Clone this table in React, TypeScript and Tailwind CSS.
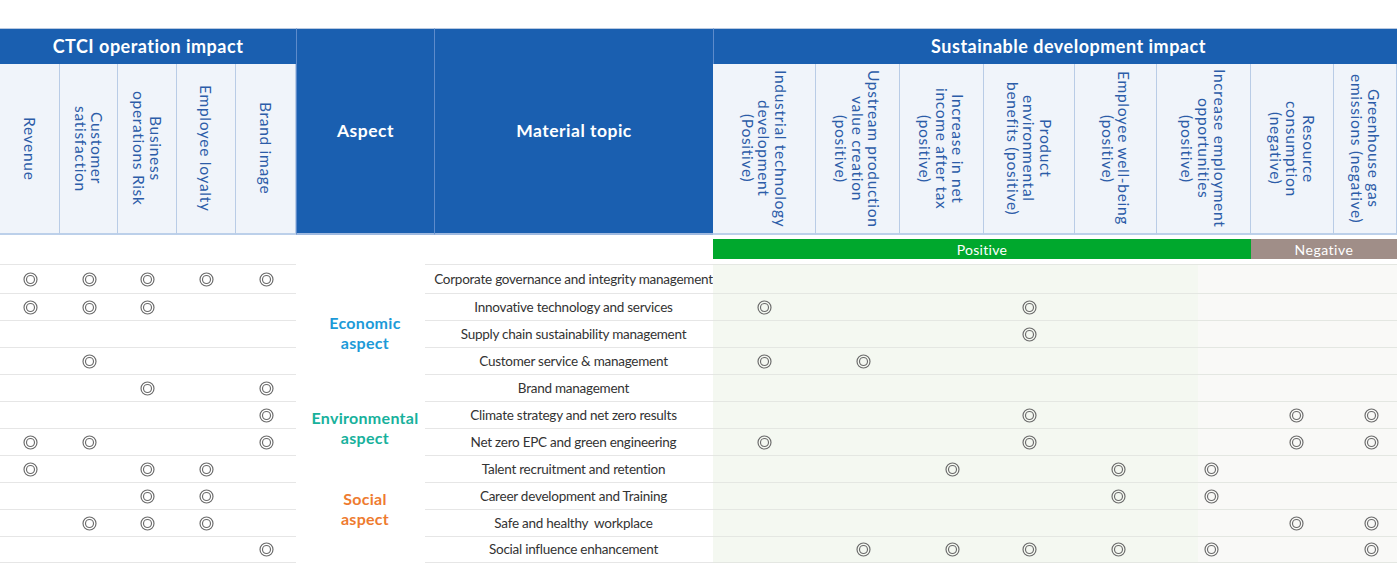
import React from "react";

const ctciCols: string[][] = [
  ["Revenue"],
  ["Customer", "satisfaction"],
  ["Business", "operations Risk"],
  ["Employee loyalty"],
  ["Brand image"],
];

const sdCols: string[][] = [
  ["Industrial technology", "development", "(Positive)"],
  ["Upstream production", "value creation", "(positive)"],
  ["Increase in net", "income after tax", "(positive)"],
  ["Product", "environmental", "benefits (positive)"],
  ["Employee well-being", "(positive)"],
  ["Increase employment", "opportunities", "(positive)"],
  ["Resource", "consumption", "(negative)"],
  ["Greenhouse gas", "emissions (negative)"],
];

type Row = { topic: string; ctci: number[]; sd: number[] };

const rows: Row[] = [
  { topic: "Corporate governance and integrity management", ctci: [1, 1, 1, 1, 1], sd: [0, 0, 0, 0, 0, 0, 0, 0] },
  { topic: "Innovative technology and services", ctci: [1, 1, 1, 0, 0], sd: [1, 0, 0, 1, 0, 0, 0, 0] },
  { topic: "Supply chain sustainability management", ctci: [0, 0, 0, 0, 0], sd: [0, 0, 0, 1, 0, 0, 0, 0] },
  { topic: "Customer service & management", ctci: [0, 1, 0, 0, 0], sd: [1, 1, 0, 0, 0, 0, 0, 0] },
  { topic: "Brand management", ctci: [0, 0, 1, 0, 1], sd: [0, 0, 0, 0, 0, 0, 0, 0] },
  { topic: "Climate strategy and net zero results", ctci: [0, 0, 0, 0, 1], sd: [0, 0, 0, 1, 0, 0, 1, 1] },
  { topic: "Net zero EPC and green engineering", ctci: [1, 1, 0, 0, 1], sd: [1, 0, 0, 1, 0, 0, 1, 1] },
  { topic: "Talent recruitment and retention", ctci: [1, 0, 1, 1, 0], sd: [0, 0, 1, 0, 1, 1, 0, 0] },
  { topic: "Career development and Training", ctci: [0, 0, 1, 1, 0], sd: [0, 0, 0, 0, 1, 1, 0, 0] },
  { topic: "Safe and healthy  workplace", ctci: [0, 1, 1, 1, 0], sd: [0, 0, 0, 0, 0, 0, 1, 1] },
  { topic: "Social influence enhancement", ctci: [0, 0, 0, 0, 1], sd: [0, 1, 1, 1, 1, 1, 0, 1] },
];

// aspect blocks start at these row indexes
const aspects: Record<number, { label: string[]; span: string; color: string }> = {
  0: { label: ["Economic", "aspect"], span: "row-span-5", color: "text-[#1c9ad8]" },
  5: { label: ["Environmental", "aspect"], span: "row-span-2", color: "text-[#17b19c]" },
  7: { label: ["Social", "aspect"], span: "row-span-4", color: "text-[#ee7b2f]" },
};

// small nudges so marks sit where the source puts them
const sdOffset = ["", "pl-[10px]", "pl-[20px]", "", "pl-[4px]", "pl-[14px]", "pl-[7px]", "pl-[11px]"];
const sdBg = [
  "bg-[#f4f8f1]",
  "bg-[#f4f8f1]",
  "bg-[#f4f8f1]",
  "bg-[#f4f8f1]",
  "bg-[#f4f8f1]",
  "bg-[linear-gradient(to_right,#f4f8f1_41px,#f9f9f7_41px)]",
  "bg-[#f9f9f7]",
  "bg-[#f9f9f7]",
];

function Mark() {
  return (
    <svg width="15" height="15" viewBox="0 0 15 15">
      <circle cx="7.5" cy="7.5" r="6.5" fill="none" stroke="#6a6a6a" strokeWidth="1.15" />
      <circle cx="7.5" cy="7.5" r="4" fill="none" stroke="#6a6a6a" strokeWidth="1.15" />
    </svg>
  );
}

function VerticalHead({ lines }: { lines: string[] }) {
  return (
    <div className="flex items-center justify-center bg-[#f0f4fa] border-r border-[#b9cce6] border-b-2 border-b-[#bcd0ea]">
      <span className="[writing-mode:vertical-rl] text-center whitespace-nowrap text-[15.5px] leading-[16.5px] tracking-[0.7px] text-[#2c5ca8]">
        {lines.map((l, i) => (
          <React.Fragment key={i}>
            {l}
            {i < lines.length - 1 && <br />}
          </React.Fragment>
        ))}
      </span>
    </div>
  );
}

export default function App() {
  return (
    <div className="w-[1398px] bg-white pt-[28px] font-['Lato',sans-serif]">
      <div className="grid grid-cols-[60px_58px_59px_59px_60px_138px_279px_103px_84px_84px_91px_82px_94px_83px_63px] grid-rows-[36px_171px_29px_29px_repeat(10,27px)]">
        {/* header row */}
        <div className="col-span-5 flex items-center justify-center bg-[#1a5fb0] border-t border-[#b8c8e0] text-white text-[18px] tracking-[0.5px] font-bold">
          CTCI operation impact
        </div>
        <div className="row-span-2 flex items-center justify-center bg-[#1a5fb0] border-t border-[#b8c8e0] border-l border-l-[#5d8bcb] border-b-2 border-b-[#9fb9df] text-white text-[17.5px] tracking-[0.5px] font-bold">
          Aspect
        </div>
        <div className="row-span-2 flex items-center justify-center bg-[#1a5fb0] border-t border-[#b8c8e0] border-l border-l-[#5d8bcb] border-b-2 border-b-[#9fb9df] text-white text-[17.5px] tracking-[0.5px] font-bold">
          Material topic
        </div>
        <div className="col-span-8 flex items-center justify-center pl-[26px] bg-[#1a5fb0] border-t border-[#b8c8e0] border-l border-l-[#5d8bcb] text-white text-[18px] tracking-[0.5px] font-bold">
          Sustainable development impact
        </div>

        {ctciCols.map((c, i) => (
          <VerticalHead key={"c" + i} lines={c} />
        ))}
        {sdCols.map((c, i) => (
          <VerticalHead key={"s" + i} lines={c} />
        ))}

        {/* positive / negative band */}
        <div className="col-span-7" />
        <div className="col-span-6 self-start mt-[4px] h-[20px] flex items-center justify-center bg-[#00a82d] text-white text-[14px] tracking-[0.3px]">
          Positive
        </div>
        <div className="col-span-2 self-start mt-[4px] h-[20px] flex items-center justify-center bg-[#a08e88] text-white text-[14px] tracking-[0.5px]">
          Negative
        </div>

        {/* body */}
        {rows.map((r, ri) => {
          const last = ri === rows.length - 1 ? "border-b" : "";
          const aspect = aspects[ri];
          return (
            <React.Fragment key={ri}>
              {r.ctci.map((v, ci) => (
                <div key={"c" + ci} className={`flex items-center justify-center border-t border-[#e6e6e6] ${last}`}>
                  {v ? <Mark /> : null}
                </div>
              ))}
              {aspect && (
                <div className={`${aspect.span} flex items-center justify-center text-center text-[16px] leading-[20px] tracking-[0.3px] font-bold ${aspect.color}`}>
                  <span>
                    {aspect.label[0]}
                    <br />
                    {aspect.label[1]}
                  </span>
                </div>
              )}
              <div className={`-ml-[9px] pl-[9px] flex items-center justify-center whitespace-pre text-[13.5px] tracking-[-0.25px] text-[#333] border-t border-[#e6e6e6] ${last}`}>
                {r.topic}
              </div>
              {r.sd.map((v, si) => (
                <div
                  key={"s" + si}
                  className={`flex items-center justify-center border-t border-[#e4e7e2] ${last} ${sdBg[si]} ${sdOffset[si]}`}
                >
                  {v ? <Mark /> : null}
                </div>
              ))}
            </React.Fragment>
          );
        })}
      </div>
    </div>
  );
}
